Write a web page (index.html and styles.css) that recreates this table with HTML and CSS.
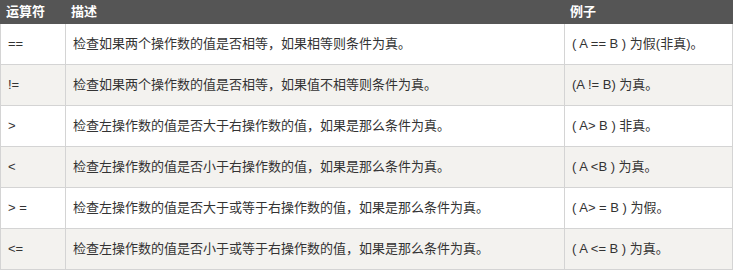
FILE: index.html
```html
<!DOCTYPE html>
<html lang="zh-CN">
<head>
<meta charset="utf-8">
<link rel="stylesheet" href="styles.css">
</head>
<body>
<table class="ops">
  <colgroup>
    <col class="c1"><col class="c2"><col class="c3">
  </colgroup>
  <thead>
    <tr><th>运算符</th><th>描述</th><th>例子</th></tr>
  </thead>
  <tbody>
    <tr><td>==</td><td>检查如果两个操作数的值是否相等，如果相等则条件为真。</td><td>( A == B ) 为假(非真)。</td></tr>
    <tr><td>!=</td><td>检查如果两个操作数的值是否相等，如果值不相等则条件为真。</td><td>(A != B) 为真。</td></tr>
    <tr><td>&gt;</td><td>检查左操作数的值是否大于右操作数的值，如果是那么条件为真。</td><td>( A&gt; B ) 非真。</td></tr>
    <tr><td>&lt;</td><td>检查左操作数的值是否小于右操作数的值，如果是那么条件为真。</td><td>( A &lt;B ) 为真。</td></tr>
    <tr><td>&gt; =</td><td>检查左操作数的值是否大于或等于右操作数的值，如果是那么条件为真。</td><td>( A&gt; = B ) 为假。</td></tr>
    <tr><td>&lt;=</td><td>检查左操作数的值是否小于或等于右操作数的值，如果是那么条件为真。</td><td>( A &lt;= B ) 为真。</td></tr>
  </tbody>
</table>
</body>
</html>
```
FILE: styles.css
```css
html, body {
  margin: 0;
  padding: 0;
  background: #fff;
}
.ops {
  border-collapse: collapse;
  width: 732px;
  table-layout: fixed;
  font-family: "Liberation Sans", "Noto Sans CJK SC", sans-serif;
  font-size: 13px;
  color: #333;
}
.c1 { width: 65px; }
.c2 { width: 499px; }
.c3 { width: 168px; }
.ops th {
  background: #555;
  color: #fff;
  font-weight: bold;
  text-align: left;
  height: 23px;
  padding: 0 5px;
  box-sizing: border-box;
  line-height: 16px;
  border: 1px solid #555;
}
.ops td {
  border: 1px solid #d4d4d4;
  height: 41px;
  box-sizing: border-box;
  padding: 0 7px;
  line-height: 16px;
}
.ops tbody tr:nth-child(even) td {
  background: #f3f2ef;
}
```
